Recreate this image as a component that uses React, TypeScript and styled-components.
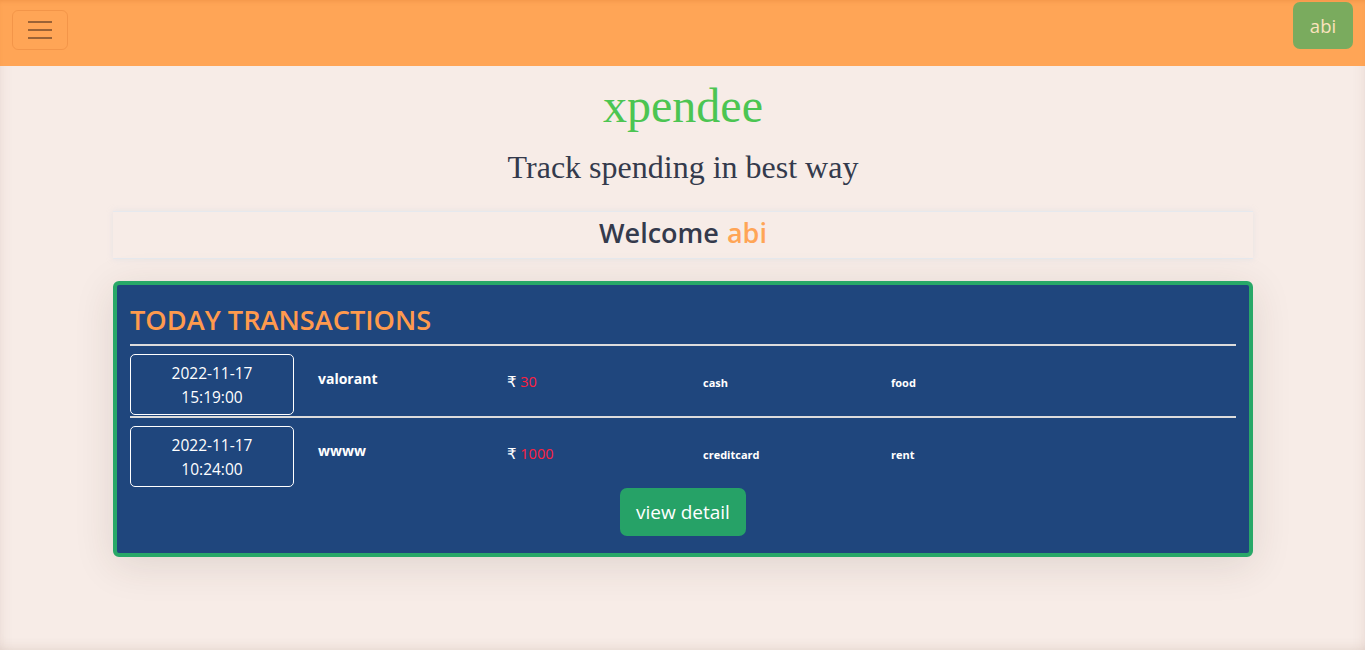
import styled, { createGlobalStyle } from "styled-components";

type Txn = {
  date: string;
  time: string;
  title: string;
  amount: number;
  mode: string;
  category: string;
};

const transactions: Txn[] = [
  { date: "2022-11-17", time: "15:19:00", title: "valorant", amount: 30, mode: "cash", category: "food" },
  { date: "2022-11-17", time: "10:24:00", title: "wwww", amount: 1000, mode: "creditcard", category: "rent" },
];

const GlobalStyle = createGlobalStyle`
  html, body {
    margin: 0;
    padding: 0;
    background: #f7ece7;
  }
  * {
    box-sizing: border-box;
  }
`;

const Page = styled.div`
  min-height: 650px;
  background: #f7ece7;
  box-shadow: inset 0 -10px 12px -8px rgba(120, 80, 60, 0.12),
    inset 10px 0 14px -10px rgba(120, 80, 60, 0.1),
    inset -10px 0 14px -10px rgba(120, 80, 60, 0.1);
  font-family: "Open Sans", "Noto Sans", sans-serif;
`;

const Navbar = styled.nav`
  height: 66px;
  background: #ffa556;
  display: flex;
  justify-content: space-between;
  align-items: flex-start;
  padding: 0 12px;
  box-shadow: inset 0 3px 4px -2px rgba(200, 100, 30, 0.25);
`;

const Toggler = styled.button`
  margin-top: 10px;
  width: 56px;
  height: 40px;
  border: 1px solid rgba(220, 120, 50, 0.35);
  border-radius: 6px;
  background: transparent;
  display: flex;
  flex-direction: column;
  justify-content: center;
  align-items: center;
  gap: 6px;
  padding: 0;

  span {
    display: block;
    width: 24px;
    height: 2px;
    background: #9a6236;
  }
`;

const UserButton = styled.button`
  margin-top: 2px;
  width: 60px;
  height: 47px;
  border: none;
  border-radius: 7px;
  background: #7aab5e;
  color: #fbe3bd;
  font-family: "Open Sans", "Noto Sans", sans-serif;
  font-size: 18.5px;
`;

const Main = styled.main`
  display: flex;
  flex-direction: column;
  align-items: center;
  padding: 0 112px 0 113px;
`;

const Brand = styled.h1`
  margin: 14px 0 0;
  font-family: "Liberation Serif", serif;
  font-weight: 400;
  font-size: 48px;
  line-height: 52px;
  color: #4cc552;
`;

const Tagline = styled.h3`
  margin: 17px 0 0;
  font-family: "Liberation Serif", serif;
  font-weight: 400;
  font-size: 32px;
  line-height: 36px;
  color: #343a4c;
`;

const WelcomeBar = styled.div`
  margin-top: 26px;
  width: 100%;
  height: 48px;
  padding-bottom: 5px;
  border-top: 1px solid #e6e9ee;
  border-bottom: 1px solid #e6e9ee;
  box-shadow: 0 0 6px rgba(200, 210, 225, 0.35);
  display: flex;
  justify-content: center;
  align-items: center;
  font-size: 27px;
  font-weight: 600;
  color: #343a4c;

  span {
    color: #ffa556;
    margin-left: 8px;
  }
`;

const Card = styled.section`
  margin-top: 22px;
  width: 100%;
  background: #1f467d;
  border: 4px solid #28a868;
  border-radius: 6px;
  padding: 16px 13px 17px;
  box-shadow: 0 8px 40px rgba(60, 40, 30, 0.12);
  display: flex;
  flex-direction: column;
`;

const CardTitle = styled.h2`
  margin: 0;
  font-size: 27.2px;
  line-height: 38px;
  font-weight: 600;
  color: #ff9a4d;
  border-bottom: 2px solid #dcdcdc;
  padding-bottom: 5px;
`;

const Row = styled.div`
  display: grid;
  grid-template-columns: 164px 165px 172px 164px 1fr;
  column-gap: 24px;
  padding-top: 8px;
  padding-bottom: 1px;
  border-bottom: 2px solid #dcdcdc;

  &:last-of-type {
    border-bottom: none;
  }
`;

const DateBox = styled.div`
  height: 61px;
  border: 1px solid #ffffff;
  border-radius: 5px;
  display: flex;
  flex-direction: column;
  justify-content: center;
  align-items: center;
  color: #ffffff;
  font-size: 15.5px;
  line-height: 24px;
`;

const Cell = styled.div<{ $size: number; $top: number; $bold?: boolean }>`
  padding-top: ${({ $top }) => $top}px;
  font-size: ${({ $size }) => $size}px;
  font-weight: ${({ $bold }) => ($bold ? 700 : 400)};
  color: #ffffff;
  line-height: 1.4;

  em {
    font-style: normal;
    color: #ff2040;
  }
`;

const Rupee = styled.span`
  font-family: "DejaVu Sans", sans-serif;
  font-size: 15px;
`;

const DetailButton = styled.button`
  align-self: center;
  margin-top: 0;
  height: 48px;
  padding: 0 16px;
  border: none;
  border-radius: 7px;
  background: #26a267;
  color: #ffffff;
  font-family: "Open Sans", "Noto Sans", sans-serif;
  font-size: 19px;
`;

export default function App() {
  return (
    <>
      <GlobalStyle />
      <Page>
        <Navbar>
          <Toggler aria-label="menu">
            <span />
            <span />
            <span />
          </Toggler>
          <UserButton>abi</UserButton>
        </Navbar>
        <Main>
          <Brand>xpendee</Brand>
          <Tagline>Track spending in best way</Tagline>
          <WelcomeBar>
            Welcome<span>abi</span>
          </WelcomeBar>
          <Card>
            <CardTitle>TODAY TRANSACTIONS</CardTitle>
            {transactions.map((t) => (
              <Row key={t.time}>
                <DateBox>
                  <div>{t.date}</div>
                  <div>{t.time}</div>
                </DateBox>
                <Cell $size={14} $top={15} $bold>
                  {t.title}
                </Cell>
                <Cell $size={14.5} $top={18}>
                  <Rupee>₹</Rupee> <em>{t.amount}</em>
                </Cell>
                <Cell $size={11} $top={21} $bold>
                  {t.mode}
                </Cell>
                <Cell $size={11} $top={21} $bold>
                  {t.category}
                </Cell>
              </Row>
            ))}
            <DetailButton>view detail</DetailButton>
          </Card>
        </Main>
      </Page>
    </>
  );
}
